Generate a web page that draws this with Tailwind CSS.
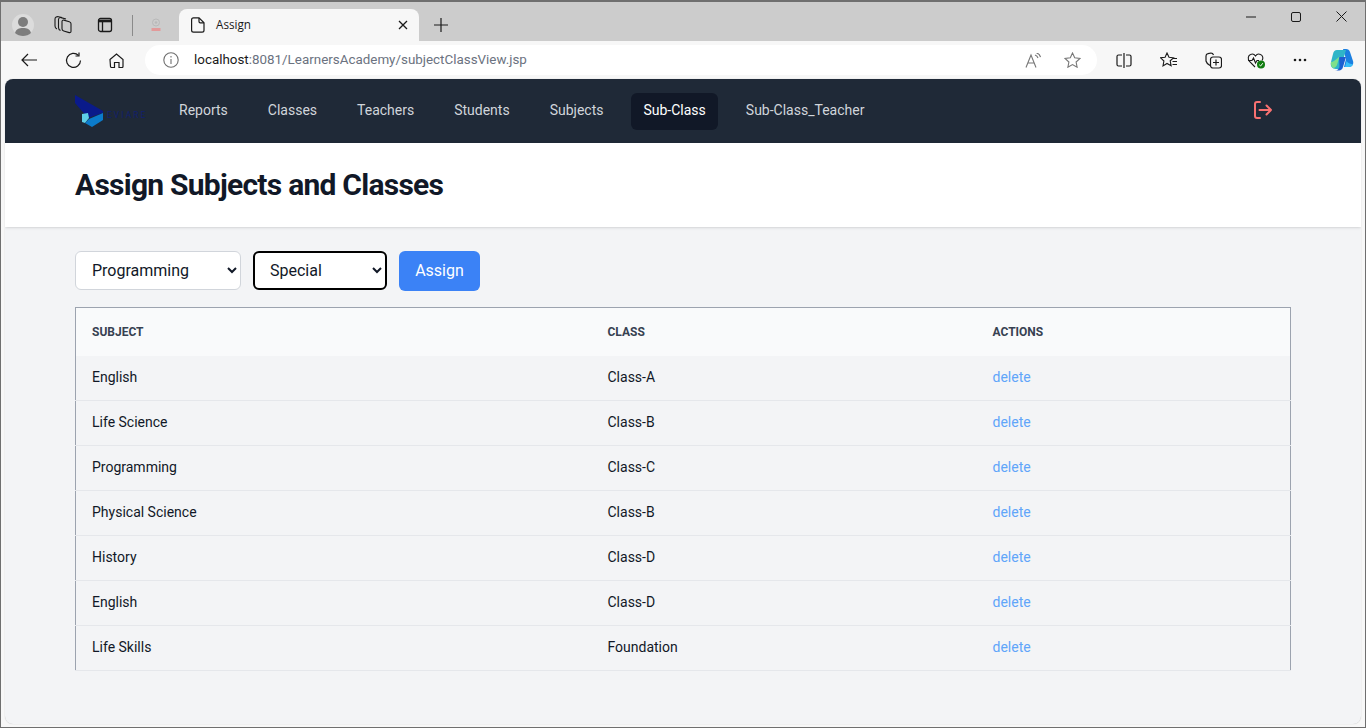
<!DOCTYPE html>
<html lang="en">
<head>
    <meta charset="UTF-8">
    <meta name="viewport" content="width=device-width, initial-scale=1.0">
    <title>Assign</title>
    <script src="https://cdn.jsdelivr.net/npm/@tailwindcss/browser@4"></script>
</head>
<body class="h-[728px] overflow-hidden bg-[#f7f7f7] font-['Roboto',sans-serif]">
    <div class="h-[728px] flex flex-col border border-[#6f6f6f] border-t-2">
        <!-- title bar -->
        <div class="h-[39px] flex items-end bg-[#cccccc] shrink-0">
            <div class="h-[32px] flex items-center pl-[11px] w-[178px] shrink-0">
                <svg class="w-[22px] h-[22px] shrink-0" viewBox="0 0 22 22"><circle cx="11" cy="11" r="11" fill="#dcdcdc"/><circle cx="11" cy="8" r="5" fill="#7d7d7d"/><path d="M3 19c1-4 4-5 8-5s7 1 8 5c-2 2-5 3-8 3s-6-1-8-3z" fill="#7d7d7d"/></svg>
                <svg class="w-[18px] h-[18px] ml-[20px] shrink-0" viewBox="0 0 18 18" fill="none" stroke="#1a1a1a" stroke-width="1.100"><path d="M8 5.500c0-1 .8-1.700 1.800-1.400l5.500 1.600c1 .3 1.700 1 1.700 2v7.500c0 1-.8 1.700-1.800 1.400L9.700 15c-1-.3-1.700-1.200-1.700-2.200z"/><path d="M12 3L7 1.600c-1-.3-2.500.4-2.500 1.900v8c0 1.500.8 2.500 2 3"/><path d="M8 1.500L4.500.7C3 .4 1 1.200 1 3v7c0 1.500.8 2.500 2 3"/></svg>
                <svg class="w-[16px] h-[16px] ml-[25px] shrink-0" viewBox="0 0 16 16" fill="none" stroke="#1a1a1a" stroke-width="1.300"><rect x="1.500" y="1.500" width="13" height="13" rx="2"/><path d="M1.500 4h13" stroke-width="2.600"/><path d="M5.500 5v9.500"/></svg>
                <div class="w-px h-[21px] bg-[#8a8a8a] ml-[19px] shrink-0"></div>
                <svg class="w-[12px] h-[14px] ml-[17px] shrink-0" viewBox="0 0 12 14"><circle cx="6" cy="4.500" r="3.500" fill="none" stroke="#b9b9b9"/><circle cx="6" cy="4.500" r="1.300" fill="#b9b9b9"/><rect x="1.500" y="10" width="9" height="3" fill="#e29a9a"/></svg>
            </div>
            <div class="w-[240px] h-[32px] bg-[#f7f7f7] rounded-t-[8px] flex items-center pl-[12px] pr-[11px] shrink-0">
                <svg class="w-[14px] h-[16px] shrink-0" viewBox="0 0 14 16" fill="none" stroke="#1a1a1a" stroke-width="1.200"><path d="M2.500.800h5.500l5 5v7.500c0 1-.8 1.900-1.900 1.900H2.500c-1 0-1.900-.9-1.900-1.900V2.700c0-1 .9-1.900 1.900-1.900z"/><path d="M8 1v3.500c0 .8.500 1.300 1.300 1.300H13"/></svg>
                <span class="ml-[11px] text-[11.7px] text-[#1a1a1a] font-['Open_Sans',sans-serif]">Assign</span>
                <svg class="w-[10px] h-[10px] ml-auto shrink-0" viewBox="0 0 10 10" stroke="#1a1a1a" stroke-width="1.300"><path d="M1 1l8 8M9 1l-8 8"/></svg>
            </div>
            <div class="h-[32px] flex items-center pl-[15px] shrink-0">
                <svg class="w-[14px] h-[14px]" viewBox="0 0 14 14" stroke="#1a1a1a" stroke-width="1.200"><path d="M7 0v14M0 7h14"/></svg>
            </div>
            <div class="h-[29px] flex items-center ml-auto self-start shrink-0">
                <svg class="w-[10px] h-[10px] mr-[35px]" viewBox="0 0 10 10" stroke="#1a1a1a"><path d="M0 5h10"/></svg>
                <svg class="w-[10px] h-[10px] mr-[35px]" viewBox="0 0 10 10" fill="none" stroke="#1a1a1a"><rect x=".5" y=".5" width="9" height="9" rx="1.500"/></svg>
                <svg class="w-[11px] h-[11px] mr-[18px]" viewBox="0 0 11 11" stroke="#1a1a1a"><path d="M.5.500l10 10M10.500.500l-10 10"/></svg>
            </div>
        </div>
        <!-- toolbar -->
        <div class="h-[38px] flex items-center bg-[#f7f7f7] shrink-0">
            <svg class="w-[16px] h-[14px] ml-[20px] shrink-0" viewBox="0 0 16 14" fill="none" stroke="#1a1a1a" stroke-width="1.200"><path d="M16 7H1M7 1L1 7l6 6"/></svg>
            <svg class="w-[17px] h-[17px] ml-[28px] shrink-0" viewBox="0 0 17 17" fill="none" stroke="#1a1a1a" stroke-width="1.200"><path d="M15.500 8.500a7 7 0 1 1-2-5"/><path d="M14 .500v3.500h-3.500"/></svg>
            <svg class="w-[15px] h-[15px] ml-[27px] shrink-0" viewBox="0 0 15 15" fill="none" stroke="#1a1a1a" stroke-width="1.200"><path d="M1 6.500l6.500-5.500 6.500 5.500v7c0 .5-.5 1-1 1h-3v-5H5.500v5h-3c-.5 0-1-.5-1-1z"/></svg>
            <div class="w-[952px] h-[30px] ml-[21px] bg-white rounded-full flex items-center pl-[18px] shrink-0">
                <svg class="w-[16px] h-[16px] shrink-0" viewBox="0 0 16 16" fill="none" stroke="#6f6f6f" stroke-width="1.100"><circle cx="8" cy="8" r="7.200"/><path d="M8 7v5M8 4v1.600"/></svg>
                <span class="ml-[15px] text-[13.4px] text-[#1a1a1a]">localhost<span class="text-[#6b7280]">:8081/LearnersAcademy/subjectClassView.jsp</span></span>
                <svg class="w-[16px] h-[15px] ml-auto shrink-0" viewBox="0 0 16 15" fill="none" stroke="#777777" stroke-width="1.100"><path d="M1 14.500L6 2l5 12.500M2.800 10h6.400M10 2c1.500.5 2.500 1.500 3 3M11.500 0c2 .5 3.500 2 4 4"/></svg>
                <svg class="w-[17px] h-[16px] ml-[23px] mr-[16px] shrink-0" viewBox="0 0 17 16" fill="none" stroke="#777777" stroke-width="1.100"><path d="M8.500 1l2.200 4.800 5.300.6-3.900 3.600 1 5.200-4.600-2.600-4.600 2.600 1-5.200L1 6.400l5.300-.6z"/></svg>
            </div>
            <svg class="w-[16px] h-[15px] ml-[19px] shrink-0" viewBox="0 0 16 15" fill="none" stroke="#1a1a1a" stroke-width="1.200"><path d="M8 0v15M6 2H2.500C1.500 2 1 2.500 1 3.500v8c0 1 .5 1.500 1.500 1.500H6M10 2h3.500c1 0 1.500.5 1.500 1.500v8c0 1-.5 1.500-1.500 1.500H10"/></svg>
            <svg class="w-[17px] h-[16px] ml-[28px] shrink-0" viewBox="0 0 17 16" fill="none" stroke="#1a1a1a" stroke-width="1.100"><path d="M7 1l2 4.300 4.500.5-3.300 3 .9 5-4.100-2.300L3 14l.9-5L.6 5.800l4.500-.5zM12 6.500h5M12.500 9.500h4.500M12.500 12.500h4.500"/></svg>
            <svg class="w-[17px] h-[17px] ml-[28px] shrink-0" viewBox="0 0 17 17" fill="none" stroke="#1a1a1a" stroke-width="1.200"><path d="M5 13.500c-2-1-3.500-2.500-4-4.500V4c0-1 .5-2 2-2.300L6 1c1 0 2 .5 2.500 2"/><rect x="5.500" y="5" width="11" height="11" rx="2.500"/><path d="M11 7.500v6M8 10.500h6"/></svg>
            <svg class="w-[19px] h-[17px] ml-[25px] shrink-0" viewBox="0 0 19 17"><path d="M8 15L2.500 9.500C.5 7 1 3.500 3.500 2.500 5.500 1.500 7.500 2.500 8.500 4c1-1.500 3-2.500 5-1.500 2.500 1 3 4 1.500 6" fill="none" stroke="#1a1a1a" stroke-width="1.100"/><path d="M1 8.500h4l1.500-2.500 2 5 1.500-2.500h2" fill="none" stroke="#1a1a1a" stroke-width="1.100"/><circle cx="14" cy="12.500" r="4" fill="#107c10"/><path d="M12.300 12.800l1.300 1.200 2.200-2.800" fill="none" stroke="#ffffff"/></svg>
            <svg class="w-[14px] h-[4px] ml-[27px] shrink-0" viewBox="0 0 14 4" fill="#1a1a1a"><circle cx="2" cy="2" r="1.300"/><circle cx="7" cy="2" r="1.300"/><circle cx="12" cy="2" r="1.300"/></svg>
            <svg class="w-[24px] h-[24px] ml-[23px] shrink-0" viewBox="0 0 24 24"><path d="M13 1h3c2 0 3.500 1 4 3l3 9c1 3-1 6-4 6h-5l2-8z" fill="#1b7fe0"/><path d="M7 2h9l-3 10-4 9H6C2 21 0 18 1 14l2-8c.5-2.500 2-4 4-4z" fill="#2fb5c8"/><path d="M9 9h7l-3 10c-.5 2-2 3.500-4 3.500H5c3 0 4-2 4.500-4z" fill="#1d5fd1"/><path d="M9.500 8.500L7 17c-.5 1.500-2 3-4 3-1.500-1-2.500-3.500-2-6 2 0 5-2 8.500-5.500z" fill="#7fe08a"/><path d="M15 19h4c2 0 3.500-1 4-3-2 0-5-.5-6.500-3z" fill="#38bdf8"/></svg>
        </div>
        <!-- page -->
        <div class="flex-1 mx-[4px] mb-[3px] bg-[#f3f4f6] rounded-[8px] overflow-hidden shadow-[0_0_1px_#b5b5b5] flex flex-col min-h-0">
            <nav class="h-[64px] bg-[#1f2937] px-[70px] flex items-center shrink-0">
                <div class="relative w-[70px] h-[40px] shrink-0">
                    <svg class="absolute left-0 top-[4px] w-[30px] h-[34px]" viewBox="0 0 30 34"><path d="M0 0l28 16v2L13 23 0 8z" fill="#0a1a8a"/><path d="M7 19l6-1 1 5-4 5-3-1z" fill="#5ecfe6"/><path d="M28 18v7l-11 7-7-4 4-4z" fill="#0b7bcb"/></svg>
                    <span class="absolute left-[32px] top-[19px] text-[8.5px] leading-[10px] tracking-[2px] text-[#12206e]">EVIARE</span>
                </div>
                <div class="flex items-center ml-[22px] gap-[16px] text-[14px]">
                    <a class="px-[12px] pt-[7px] pb-[9px] rounded-md text-[#d1d5db]">Reports</a>
                    <a class="px-[12px] pt-[7px] pb-[9px] rounded-md text-[#d1d5db]">Classes</a>
                    <a class="px-[12px] pt-[7px] pb-[9px] rounded-md text-[#d1d5db]">Teachers</a>
                    <a class="px-[12px] pt-[7px] pb-[9px] rounded-md text-[#d1d5db]">Students</a>
                    <a class="px-[12px] pt-[7px] pb-[9px] rounded-md text-[#d1d5db]">Subjects</a>
                    <a class="px-[12px] pt-[7px] pb-[9px] rounded-md bg-[#111827] text-white">Sub-Class</a>
                    <a class="px-[12px] pt-[7px] pb-[9px] rounded-md text-[#d1d5db]">Sub-Class_Teacher</a>
                </div>
                <svg class="w-[18px] h-[18px] ml-auto mr-[19px] -mt-[2px] shrink-0" viewBox="0 0 18 18" fill="none" stroke="#f87171" stroke-width="2" stroke-linecap="round" stroke-linejoin="round"><path d="M6 1H3C1.800 1 1 1.800 1 3v12c0 1.200.8 2 2 2h3M5.500 9H17M12.500 4.500L17 9l-4.500 4.500"/></svg>
            </nav>
            <header class="h-[84px] bg-white shadow px-[70px] flex items-center shrink-0">
                <h1 class="text-3xl font-bold tracking-tight text-[#111827]">Assign Subjects and Classes</h1>
            </header>
            <main class="px-[70px] pt-[24px]">
                <div class="flex items-start gap-[12px] mb-[16px]">
                    <select class="w-[166px] h-[39px] pl-[12px] bg-white border border-[#d1d5db] rounded-md text-[#111827] text-base">
                        <option>Programming</option>
                    </select>
                    <select class="w-[134px] h-[39px] pl-[11px] bg-white border-2 border-black rounded-md text-[#111827] text-base">
                        <option>Special</option>
                    </select>
                    <button class="w-[81px] h-[40px] bg-[#3b82f6] text-white rounded-md text-base">Assign</button>
                </div>
                <table class="w-full table-fixed border-collapse border border-[#9ca3af] text-[14px]">
                    <thead class="bg-[#f9fafb]">
                        <tr class="h-[48px] text-left text-[12px] font-bold uppercase text-[#374151]">
                            <th class="w-[516px] pl-[16px] font-bold">Subject</th>
                            <th class="w-[385px] pl-[16px] font-bold">Class</th>
                            <th class="pl-[16px] font-bold">Actions</th>
                        </tr>
                    </thead>
                    <tbody class="text-[#111827]">
                        <tr class="h-[45px] border-b border-[#e5e7eb]"><td class="pl-[16px]">English</td><td class="pl-[16px]">Class-A</td><td class="pl-[16px]"><a class="text-[#60a5fa]">delete</a></td></tr>
                        <tr class="h-[45px] border-b border-[#e5e7eb]"><td class="pl-[16px] pb-[2px]">Life Science</td><td class="pl-[16px] pb-[2px]">Class-B</td><td class="pl-[16px] pb-[2px]"><a class="text-[#60a5fa]">delete</a></td></tr>
                        <tr class="h-[45px] border-b border-[#e5e7eb]"><td class="pl-[16px] pb-[2px]">Programming</td><td class="pl-[16px] pb-[2px]">Class-C</td><td class="pl-[16px] pb-[2px]"><a class="text-[#60a5fa]">delete</a></td></tr>
                        <tr class="h-[45px] border-b border-[#e5e7eb]"><td class="pl-[16px] pb-[2px]">Physical Science</td><td class="pl-[16px] pb-[2px]">Class-B</td><td class="pl-[16px] pb-[2px]"><a class="text-[#60a5fa]">delete</a></td></tr>
                        <tr class="h-[45px] border-b border-[#e5e7eb]"><td class="pl-[16px] pb-[2px]">History</td><td class="pl-[16px] pb-[2px]">Class-D</td><td class="pl-[16px] pb-[2px]"><a class="text-[#60a5fa]">delete</a></td></tr>
                        <tr class="h-[45px] border-b border-[#e5e7eb]"><td class="pl-[16px] pb-[2px]">English</td><td class="pl-[16px] pb-[2px]">Class-D</td><td class="pl-[16px] pb-[2px]"><a class="text-[#60a5fa]">delete</a></td></tr>
                        <tr class="h-[45px] border-b border-[#e5e7eb]"><td class="pl-[16px] pb-[2px]">Life Skills</td><td class="pl-[16px] pb-[2px]">Foundation</td><td class="pl-[16px] pb-[2px]"><a class="text-[#60a5fa]">delete</a></td></tr>
                    </tbody>
                </table>
            </main>
        </div>
    </div>
</body>
</html>
